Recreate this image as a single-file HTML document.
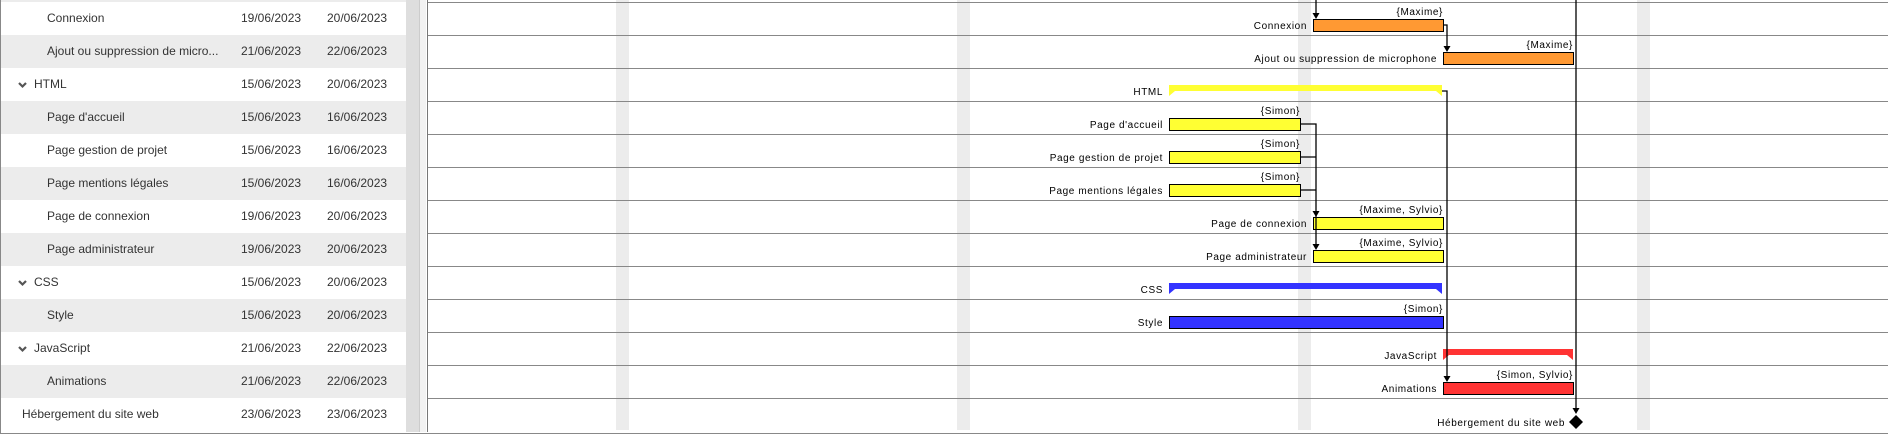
<!DOCTYPE html>
<html><head><meta charset="utf-8"><style>
html,body{margin:0;padding:0;width:1888px;height:437px;overflow:hidden;background:#fff;font-family:"Liberation Sans",Arial,sans-serif}
.l{position:absolute;left:0;width:406px;height:33px;font-size:12px;color:#333;line-height:33px}
.l span{position:absolute;white-space:nowrap}
.g{background:#ececec}
</style></head><body>
<div style="position:absolute;left:0;top:0;width:406px;height:2px;background:#ececec"></div>
<div class="l" style="top:2px"><span style="left:47px">Connexion</span><span style="left:241px">19/06/2023</span><span style="left:327px">20/06/2023</span></div>
<div class="l g" style="top:35px"><span style="left:47px">Ajout ou suppression de micro...</span><span style="left:241px">21/06/2023</span><span style="left:327px">22/06/2023</span></div>
<div class="l" style="top:68px"><span style="left:34px">HTML</span><span style="left:241px">15/06/2023</span><span style="left:327px">20/06/2023</span></div>
<div class="l g" style="top:101px"><span style="left:47px">Page d'accueil</span><span style="left:241px">15/06/2023</span><span style="left:327px">16/06/2023</span></div>
<div class="l" style="top:134px"><span style="left:47px">Page gestion de projet</span><span style="left:241px">15/06/2023</span><span style="left:327px">16/06/2023</span></div>
<div class="l g" style="top:167px"><span style="left:47px">Page mentions légales</span><span style="left:241px">15/06/2023</span><span style="left:327px">16/06/2023</span></div>
<div class="l" style="top:200px"><span style="left:47px">Page de connexion</span><span style="left:241px">19/06/2023</span><span style="left:327px">20/06/2023</span></div>
<div class="l g" style="top:233px"><span style="left:47px">Page administrateur</span><span style="left:241px">19/06/2023</span><span style="left:327px">20/06/2023</span></div>
<div class="l" style="top:266px"><span style="left:34px">CSS</span><span style="left:241px">15/06/2023</span><span style="left:327px">20/06/2023</span></div>
<div class="l g" style="top:299px"><span style="left:47px">Style</span><span style="left:241px">15/06/2023</span><span style="left:327px">20/06/2023</span></div>
<div class="l" style="top:332px"><span style="left:34px">JavaScript</span><span style="left:241px">21/06/2023</span><span style="left:327px">22/06/2023</span></div>
<div class="l g" style="top:365px"><span style="left:47px">Animations</span><span style="left:241px">21/06/2023</span><span style="left:327px">22/06/2023</span></div>
<div class="l" style="top:398px"><span style="left:22px">Hébergement du site web</span><span style="left:241px">23/06/2023</span><span style="left:327px">23/06/2023</span></div>

<svg width="1888" height="437" style="position:absolute;left:0;top:0" font-family="Liberation Sans, Arial, sans-serif">
<g fill="none" stroke="#555" stroke-width="2.2">
<polyline points="19,83 22.5,86.5 26,83"/><polyline points="19,281 22.5,284.5 26,281"/><polyline points="19,347 22.5,350.5 26,347"/>
</g>
<rect x="0" y="0" width="1" height="433" fill="#888"/>
<rect x="406" y="0" width="14" height="432" fill="#dedede"/>
<rect x="419" y="0" width="1" height="432" fill="#ccc"/>
<rect x="420" y="0" width="6" height="432" fill="#f2f2f2"/>
<rect x="427" y="0" width="1" height="432" fill="#777"/>
<rect x="0" y="433" width="1888" height="1" fill="#888"/>
<g fill="#ececec">
<rect x="616" y="0" width="13" height="430"/><rect x="957" y="0" width="13" height="430"/><rect x="1298" y="0" width="13" height="430"/><rect x="1637" y="0" width="13" height="430"/>
</g>
<g fill="#888">
<rect x="428" y="2" width="1460" height="1"/><rect x="428" y="35" width="1460" height="1"/><rect x="428" y="68" width="1460" height="1"/><rect x="428" y="101" width="1460" height="1"/><rect x="428" y="134" width="1460" height="1"/><rect x="428" y="167" width="1460" height="1"/><rect x="428" y="200" width="1460" height="1"/><rect x="428" y="233" width="1460" height="1"/><rect x="428" y="266" width="1460" height="1"/><rect x="428" y="299" width="1460" height="1"/><rect x="428" y="332" width="1460" height="1"/><rect x="428" y="365" width="1460" height="1"/><rect x="428" y="398" width="1460" height="1"/>
</g>
<g stroke="#000" stroke-width="1">
<rect x="1313.5" y="19.5" width="130" height="12" fill="#ff9933"/>
<rect x="1443.5" y="52.5" width="130" height="12" fill="#ff9933"/>
<rect x="1169.5" y="118.5" width="131" height="12" fill="#ffff33"/>
<rect x="1169.5" y="151.5" width="131" height="12" fill="#ffff33"/>
<rect x="1169.5" y="184.5" width="131" height="12" fill="#ffff33"/>
<rect x="1313.5" y="217.5" width="130" height="12" fill="#ffff33"/>
<rect x="1313.5" y="250.5" width="130" height="12" fill="#ffff33"/>
<rect x="1169.5" y="316.5" width="274" height="12" fill="#3333ff"/>
<rect x="1443.5" y="382.5" width="130" height="12" fill="#ff3333"/>
</g>
<path d="M1169 85H1442V96L1436 91H1175L1169 96Z" fill="#ffff33"/>
<path d="M1169 283H1442V294L1436 289H1175L1169 294Z" fill="#3333ff"/>
<path d="M1443 349H1573V360L1567 355H1449L1443 360Z" fill="#ff3333"/>
<g stroke="#000" stroke-width="1.3" fill="none">
<path d="M1316 0V15"/>
<path d="M1443 25H1447V48"/>
<path d="M1300 124H1316V246M1300 157H1316M1300 190H1316"/>
<path d="M1442 91H1447V378"/>
<path d="M1576 0V410"/>
</g>
<g fill="#000">
<path d="M1312.5 13h7l-3.5 6z"/><path d="M1443.5 46h7l-3.5 6z"/><path d="M1312.5 211h7l-3.5 6z"/><path d="M1312.5 244h7l-3.5 6z"/><path d="M1443.5 376h7l-3.5 6z"/><path d="M1572.5 408h7l-3.5 6z"/>
<path d="M1576 415l7 7-7 7-7-7z"/>
</g>
<g font-size="10" letter-spacing="0.6" fill="#000" text-anchor="end">
<text x="1307" y="29">Connexion</text><text x="1443" y="15">{Maxime}</text>
<text x="1437" y="62">Ajout ou suppression de microphone</text><text x="1573" y="48">{Maxime}</text>
<text x="1163" y="95">HTML</text>
<text x="1163" y="128">Page d'accueil</text><text x="1300" y="114">{Simon}</text>
<text x="1163" y="161">Page gestion de projet</text><text x="1300" y="147">{Simon}</text>
<text x="1163" y="194">Page mentions légales</text><text x="1300" y="180">{Simon}</text>
<text x="1307" y="227">Page de connexion</text><text x="1443" y="213">{Maxime, Sylvio}</text>
<text x="1307" y="260">Page administrateur</text><text x="1443" y="246">{Maxime, Sylvio}</text>
<text x="1163" y="293">CSS</text>
<text x="1163" y="326">Style</text><text x="1443" y="312">{Simon}</text>
<text x="1437" y="359">JavaScript</text>
<text x="1437" y="392">Animations</text><text x="1573" y="378">{Simon, Sylvio}</text>
<text x="1565" y="426">Hébergement du site web</text>
</g>
</svg>
</body></html>
